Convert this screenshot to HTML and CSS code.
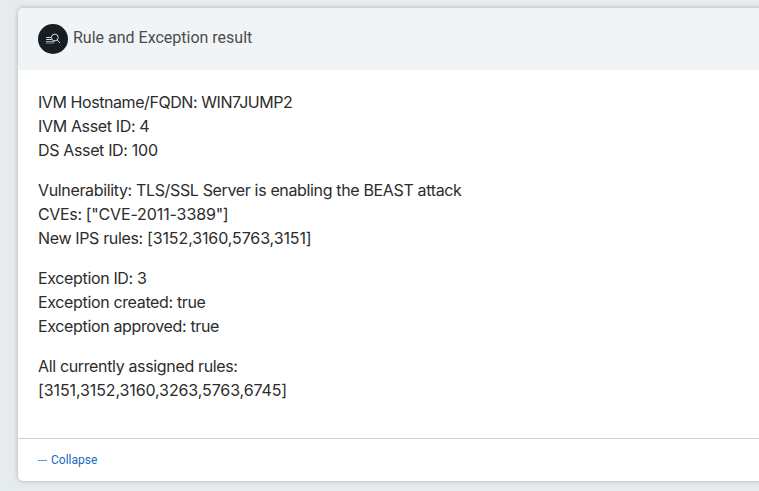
FILE: index.html
```html
<!DOCTYPE html>
<html lang="en">
<head>
<meta charset="utf-8">
<title>Rule and Exception result</title>
<link rel="stylesheet" href="styles.css">
</head>
<body>
<article class="card">
  <header class="card-header">
    <span class="badge"><svg width="30" height="30" viewBox="0 0 30 30" fill="none" stroke="#d5dadd" stroke-width="1"><circle cx="16.8" cy="13.5" r="3.4"/><path d="M19.2 16l2.8 3M8.2 13.5h5M8.2 15.5h5.5"/><path d="M7.8 17.5h9M7.8 19h8.5" stroke="#a3a9ad" stroke-width=".9"/></svg></span>
    <h1 class="title">Rule and Exception result</h1>
  </header>
  <div class="card-body">
    <p><span class="host">IVM Hostname/FQDN: WIN7JUMP2</span><br>IVM Asset ID: 4<br>DS Asset ID: <span class="num">100</span></p>
    <p>Vulnerability: TLS/SSL Server is enabling the BEAST attack<br>CVEs: ["<span class="num">CVE-2011-3389</span>"]<br>New IPS rules: <span class="num">[3152,3160,5763,3151]</span></p>
    <p>Exception ID: 3<br>Exception created: true<br>Exception approved: true</p>
    <p>All currently assigned rules:<br><span class="num">[3151,3152,3160,3263,5763,6745]</span></p>
  </div>
  <footer class="card-footer"><a class="collapse"><i class="dash"></i>Collapse</a></footer>
</article>
</body>
</html>
```
FILE: styles.css
```css
* { box-sizing: border-box; }
body { margin: 0; padding: 8px 0 0 18px; height: 491px; background: #e6ebed; font-family: Inter, sans-serif; overflow: hidden; }
.card { width: 760px; height: 473px; display: flex; flex-direction: column; background: #fff; border-radius: 5px; box-shadow: 0 0 5px rgba(0,0,0,.25); overflow: hidden; }
.card-header { flex: 0 0 62px; padding: 0 20px; display: flex; align-items: center; gap: 5px; background: #f0f4f7; }
.badge { width: 30px; height: 30px; border-radius: 50%; background: #161e23; }
.badge svg { display: block; }
.title { margin: 0 0 3px; font: 400 16px/24px Roboto, sans-serif; color: #4c4c4c; }
.card-body { flex: 1; padding: 20px; font-size: 16px; line-height: 24px; color: #2c2c2c; letter-spacing: -0.35px; }
.card-body p { margin: 0 0 16px; }
.host { letter-spacing: -0.43px; }
.num { letter-spacing: -0.11px; }
.card-footer { flex: 0 0 43px; border-top: 1px solid #cfcfcf; padding: 0 20px; display: flex; align-items: center; }
.collapse { display: flex; align-items: center; gap: 4px; font: 12px/18px Roboto, sans-serif; color: #1b69bd; }
.dash { width: 9px; height: 1px; background: #5c9ad6; }
```
